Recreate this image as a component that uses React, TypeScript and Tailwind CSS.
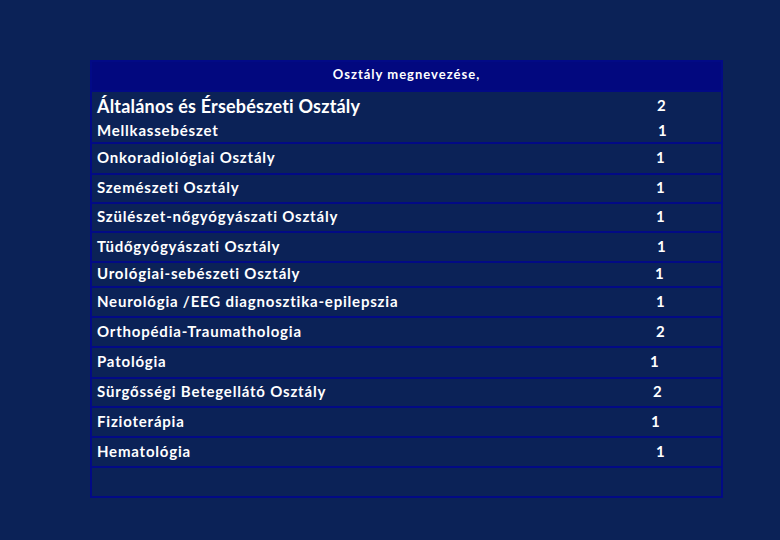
const rows = [
  { h: 52, lines: [
    { name: "Általános és Érsebészeti Osztály", n: "2", off: 8, big: true },
    { name: "Mellkassebészet", n: "1", off: 9 },
  ] },
  { h: 31, lines: [{ name: "Onkoradiológiai Osztály", n: "1", off: 7 }] },
  { h: 29, lines: [{ name: "Szemészeti Osztály", n: "1", off: 7 }] },
  { h: 29, lines: [{ name: "Szülészet-nőgyógyászati Osztály", n: "1", off: 7 }] },
  { h: 30, lines: [{ name: "Tüdőgyógyászati Osztály", n: "1", off: 8 }] },
  { h: 25, lines: [{ name: "Urológiai-sebészeti Osztály", n: "1", off: 6 }] },
  { h: 30, lines: [{ name: "Neurológia /EEG diagnosztika-epilepszia", n: "1", off: 7 }] },
  { h: 30, lines: [{ name: "Orthopédia-Traumathologia", n: "2", off: 7 }] },
  { h: 31, lines: [{ name: "Patológia", n: "1", off: 1 }] },
  { h: 29, lines: [{ name: "Sürgősségi Betegellátó Osztály", n: "2", off: 4 }] },
  { h: 30, lines: [{ name: "Fizioterápia", n: "1", off: 2 }] },
  { h: 30, lines: [{ name: "Hematológia", n: "1", off: 7 }] },
  { h: 30, lines: [] },
];

export default function App() {
  return (
    <div
      className="w-[780px] h-[540px] bg-[#0b2257] pt-[60px] pl-[90px] text-white font-bold"
      style={{ fontFamily: "Lato, 'Open Sans', sans-serif" }}
    >
      <div className="w-[633px] border-2 border-[#020a86] flex flex-col">
        <div className="h-[30px] pb-[2px] bg-[#02087f] border-b-2 border-[#020a86] flex items-center justify-center text-[13px] tracking-[1px]">
          Osztály megnevezése,
        </div>
        {rows.map((r, i) => (
          <div
            key={i}
            className={`flex flex-col justify-center ${r.lines.length === 1 ? "pb-[2px]" : ""} ${
              i < rows.length - 1 ? "border-b-2 border-[#020a86]" : ""
            }`}
            style={{ height: r.h - (i === rows.length - 1 ? 2 : 0) }}
          >
            {r.lines.map((l, j) => (
              <div
                key={j}
                className={`flex items-center ${r.lines.length > 1 ? (j === 0 ? "h-[29px]" : "h-[23px]") : ""}`}
              >
                <div
                  className={`w-[557px] pl-[5px] leading-none ${
                    l.big ? "text-[18px] tracking-[0.2px]" : "text-[15px] tracking-[0.8px]"
                  }`}
                >
                  {l.name}
                </div>
                <span className="text-[15px] leading-none" style={{ marginLeft: l.off }}>
                  {l.n}
                </span>
              </div>
            ))}
          </div>
        ))}
      </div>
    </div>
  );
}
